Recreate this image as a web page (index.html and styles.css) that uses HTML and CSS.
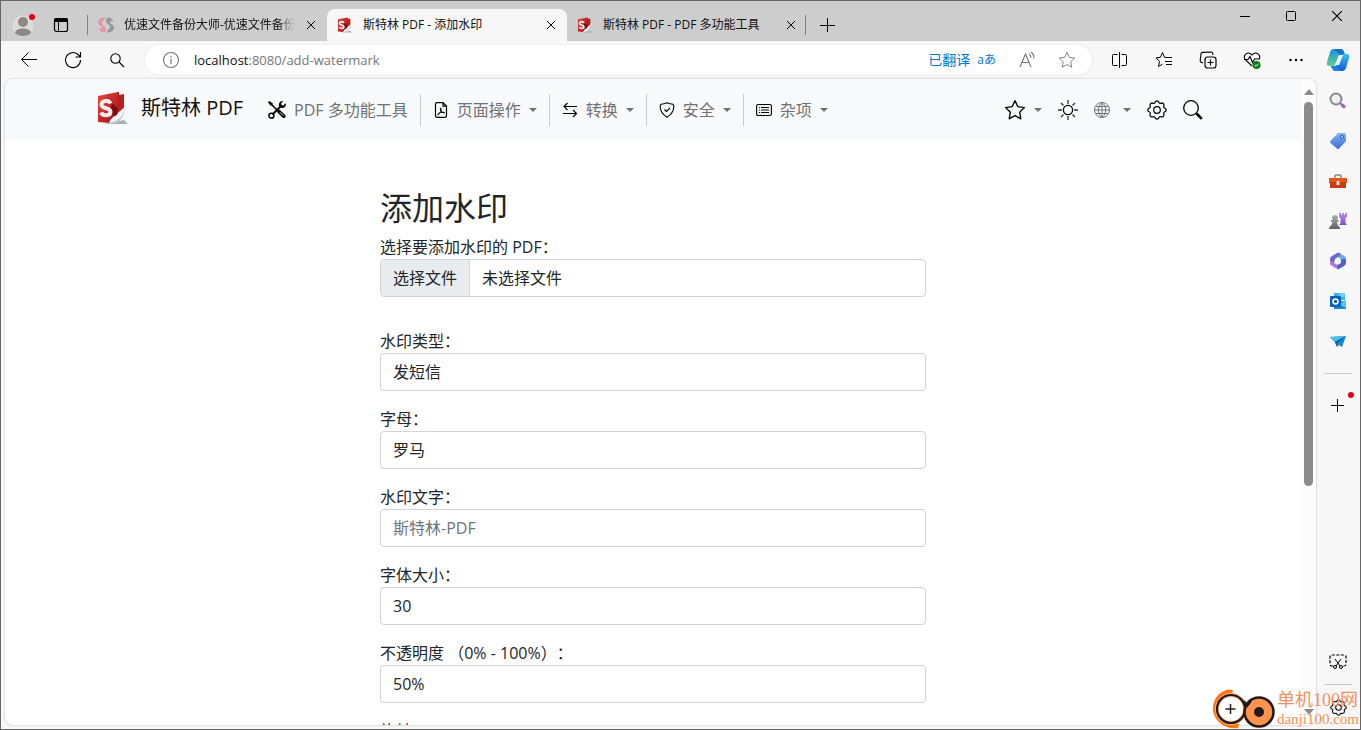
FILE: index.html
```html
<!DOCTYPE html>
<html lang="zh-CN">
<head>
<meta charset="utf-8">
<title>斯特林 PDF - 添加水印</title>
<link rel="stylesheet" href="styles.css">
</head>
<body>
<svg class="defs" aria-hidden="true">
  <defs>
    <linearGradient id="g-red" x1="0" y1="0" x2="1" y2="1"><stop offset="0" stop-color="#e8453f"/><stop offset="1" stop-color="#9d1014"/></linearGradient>
    <linearGradient id="g-cop1" x1="0" y1="0" x2="0" y2="1"><stop offset="0" stop-color="#1b8fe0"/><stop offset="1" stop-color="#62d08f"/></linearGradient>
    <linearGradient id="g-cop2" x1="0" y1="0" x2="0" y2="1"><stop offset="0" stop-color="#35c3f0"/><stop offset="1" stop-color="#1456dc"/></linearGradient>
    <linearGradient id="g-tag" x1="0" y1="0" x2="0" y2="1"><stop offset="0" stop-color="#7fb2f2"/><stop offset="1" stop-color="#3d6fd6"/></linearGradient>
    <linearGradient id="g-gray" x1="0" y1="0" x2="0" y2="1"><stop offset="0" stop-color="#b0b0b0"/><stop offset="1" stop-color="#606060"/></linearGradient>
    <linearGradient id="g-purple" x1="0" y1="0" x2="0" y2="1"><stop offset="0" stop-color="#b58af0"/><stop offset="1" stop-color="#8250c8"/></linearGradient>
    <symbol id="logo" viewBox="0 0 32 34">
      <path d="M7 33h24l-4-4z" fill="#9fb3b8"/>
      <path d="M14 4 22 1v5l5-2v19L10 31z" fill="#a81519"/>
      <path d="M1 5 21 1l1 20-9 11L1 31z" fill="url(#g-red)"/>
      <path d="M22 1v3l5-1v17l-6 6z" fill="#b8201f"/>
      <path d="M15 12l6 6-2 8-6-4z" fill="#7d0b10"/>
      <path d="M29 14c-3 5-8 6-9 10-3 1-6 3-8 8 7 1 14-1 17-18z" fill="#eef3f3"/>
      <path d="M29 14c-1 9-6 16-17 18 9 1 15-3 17-18z" fill="#bccbce"/>
      <path d="M13.500 12.500c-1.500-4-9-3-9 1.200 0 4.300 9 2.800 9 7 0 4.300-7.500 4.600-9.500.8" fill="none" stroke="#f5e9e9" stroke-width="4"/>
    </symbol>
    <symbol id="close" viewBox="0 0 10 10"><path d="M1 1l8 8M9 1 1 9" stroke="currentColor" fill="none"/></symbol>
    <symbol id="star" viewBox="0 0 20 20"><path d="M10 1.500l2.600 5.500 6 .8-4.400 4.200 1.100 6L10 15.100 4.700 18l1.100-6L1.400 7.800l6-.8z" fill="none" stroke="currentColor" stroke-linejoin="round"/></symbol>
    <symbol id="gear" viewBox="0 0 20 20"><path d="M8.500 1.500Q10 .2 11.500 1.500c.4 1.700 1.700 2.300 3.200 1.400q2.200.2 2.400 2.400c-.9 1.500-.3 2.800 1.400 3.200q1.300 1.500 0 3c-1.700.4-2.300 1.700-1.400 3.200q-.2 2.200-2.400 2.400c-1.500-.9-2.800-.3-3.200 1.400q-1.500 1.300-3 0c-.4-1.700-1.700-2.300-3.200-1.400q-2.200-.2-2.400-2.400c.9-1.500.3-2.800-1.400-3.200q-1.300-1.500 0-3c1.700-.4 2.300-1.700 1.400-3.200q.2-2.200 2.400-2.400c1.500.9 2.800.3 3.200-1.400z" fill="none" stroke="currentColor" stroke-width="1.200"/><circle cx="10" cy="10" r="3.300" fill="none" stroke="currentColor" stroke-width="1.200"/></symbol>
  </defs>
</svg>
<div class="window">
  <header class="titlebar">
    <button class="avatar" aria-label="个人资料">
      <svg viewBox="0 0 24 24" width="24" height="24"><circle cx="12" cy="13" r="10.500" fill="#dedcda"/><circle cx="12" cy="9" r="5" fill="#8c8885"/><path d="M4 20c0-6 16-6 16 0-4 4-12 4-16 0z" fill="#8c8885"/><circle cx="21" cy="4" r="3" fill="#e3000f"/></svg>
    </button>
    <button class="workspace" aria-label="标签页操作">
      <svg viewBox="0 0 16 16" width="16" height="16"><rect x="1.500" y="1.500" width="13" height="13" rx="2" fill="none" stroke="#000" stroke-width="1.200"/><path d="M1 5V3q0-2 2-2h10q2 0 2 2v2z"/><path d="M5.500 4v10" stroke="#000"/></svg>
    </button>
    <div class="tab tab-first">
      <svg viewBox="0 0 16 16" width="16" height="16"><path d="M7.500.5C3 0-1 3 .5 7c1 2 3 2 3.500 3.500C4 12 2.500 12 1 11c0 4 6 6.500 7 2 .5-3.500-4-4-4-7 0-2 2-2 3.500-5.500z" fill="#e3989c"/><path d="M8.500 15.500c4.500.5 8.500-2.500 7-6.500-1-2-3-2-3.500-3.500C12 4 13.500 4 15 5c0-4-6-6.500-7-2-.5 3.500 4 4 4 7 0 2-2 2-3.500 5.500z" fill="#969696"/></svg>
      <span class="tab-title tab-fade">优速文件备份大师-优速文件备份</span>
      <button class="x" aria-label="关闭"><svg width="10" height="10"><use href="#close"/></svg></button>
    </div>
    <div class="tab tab-active">
      <svg width="16" height="16"><use href="#logo"/></svg>
      <span class="tab-title">斯特林 PDF - 添加水印</span>
      <button class="x" aria-label="关闭"><svg width="10" height="10"><use href="#close"/></svg></button>
    </div>
    <div class="tab tab-last">
      <svg width="16" height="16"><use href="#logo"/></svg>
      <span class="tab-title">斯特林 PDF - PDF 多功能工具</span>
      <button class="x" aria-label="关闭"><svg width="10" height="10"><use href="#close"/></svg></button>
    </div>
    <button class="new-tab" aria-label="新建标签页"><svg viewBox="0 0 16 16" width="16" height="16"><path d="M8.500 1v14M1 8.500h15" stroke="#000" fill="none"/></svg></button>
    <div class="controls">
      <button aria-label="最小化"><svg viewBox="0 0 12 12" width="12" height="12"><path d="M1 6.500h10" stroke="#000"/></svg></button>
      <button aria-label="最大化"><svg viewBox="0 0 12 12" width="12" height="12"><rect x="1.500" y="1.500" width="9" height="9" rx="1" fill="none" stroke="#000"/></svg></button>
      <button aria-label="关闭窗口"><svg width="12" height="12"><use href="#close"/></svg></button>
    </div>
  </header>

  <div class="toolbar">
    <button class="tool" aria-label="后退"><svg viewBox="0 0 18 18" width="18" height="18"><path d="M17 8.500H1.500M8.500 1.500l-7 7 7 7" fill="none" stroke="#000"/></svg></button>
    <button class="tool" aria-label="刷新"><svg viewBox="0 0 18 18" width="18" height="18"><path d="M16.500 9A7.500 7.500 0 1 1 14 3.500l2 2M16.500 1v5h-5" fill="none" stroke="#000" stroke-width="1.100"/></svg></button>
    <button class="tool" aria-label="搜索"><svg viewBox="0 0 16 16" width="16" height="16"><circle cx="6.500" cy="6.500" r="4.700" fill="none" stroke="#000" stroke-width="1.100"/><path d="M10 10l5 5" stroke="#000" stroke-width="1.100"/></svg></button>
    <div class="address">
      <svg viewBox="0 0 18 18" width="18" height="18"><circle cx="9" cy="9" r="7.500" fill="none" stroke="#767676" stroke-width="1.100"/><path d="M9 8v5M9 5v1.500" stroke="#767676" stroke-width="1.200"/></svg>
      <div class="url"><b>localhost</b>:8080/add-watermark</div>
      <a class="translated" href="#">已翻译</a>
      <a class="glyphs" href="#">aあ</a>
      <button class="tool" aria-label="朗读"><svg viewBox="0 0 18 18" width="18" height="18"><path d="M2 16 7.500 3 13 16M4 11.500h7M11 3q2 1.500 2 4M13 1q3 2 3 6.500" fill="none" stroke="#767676" stroke-width="1.100"/></svg></button>
      <button class="tool gray" aria-label="收藏"><svg width="18" height="18"><use href="#star"/></svg></button>
    </div>
    <button class="tool" aria-label="分屏"><svg viewBox="0 0 18 18" width="18" height="18"><path d="M6.500 3.500h-4q-1 0-1 1v9q0 1 1 1h4M10.500 3.500h4q1 0 1 1v9q0 1-1 1h-4M8.500 1v16" fill="none" stroke="#000"/></svg></button>
    <button class="tool" aria-label="收藏夹"><svg viewBox="0 0 18 18" width="18" height="18"><path d="M11 6.500 9.500 6.300 7.500 1.500l-2 4.800-4.500.6 3.500 3.400-1 5.200 4-2.300M11 6.500h6M10 10.500h7M11 13.500h6" fill="none" stroke="#000"/></svg></button>
    <button class="tool" aria-label="集锦"><svg viewBox="0 0 18 18" width="18" height="18"><rect x="6" y="6" width="11" height="11" rx="2.500" fill="none" stroke="#000" stroke-width="1.200"/><path d="M11.500 8.500v6M8.500 11.500h6M4 12 2.600 11.500Q1 11 1.200 9.500L2 3q.2-1.800 2-1.600L12 1q1.600 0 1.800 1.600L14 4" fill="none" stroke="#000" stroke-width="1.100"/></svg></button>
    <button class="tool" aria-label="浏览器概要"><svg viewBox="0 0 18 18" width="18" height="18"><path d="M9 15 2 8.500C-.5 4 5-.5 9 4c4-4.500 9.500 0 7 4.500M1 8.500h4l2-3 2.500 6 2-3.500H16" fill="none" stroke="#000" stroke-width="1.100"/><circle cx="13.500" cy="14" r="4" fill="#0f7b10"/><path d="M11.700 14l1.300 1.300 2.300-2.500" fill="none" stroke="#fff"/></svg></button>
    <button class="tool" aria-label="更多"><svg viewBox="0 0 18 18" width="18" height="18"><circle cx="3.500" cy="9" r="1.200"/><circle cx="9" cy="9" r="1.200"/><circle cx="14.500" cy="9" r="1.200"/></svg></button>
    <button class="copilot" aria-label="Copilot"><svg viewBox="0 0 24 24" width="24" height="24"><path d="M8 1h7q2 0 3 3l1 3h-4q-2 0-3 3l-2 5q-1 3-4 3H3q-3 0-2-4L4 4q1-3 4-3z" fill="url(#g-cop1)"/><path d="M8 1h7q2 0 3 3l1 3h-5L10 3z" fill="#1573c8"/><path d="M16 23H9q-2 0-3-3l-1-2h4q2 0 3-3l2-5q1-4 4-4h3q3 0 2 4l-3 10q-1 3-4 3z" fill="url(#g-cop2)"/><path d="M16 23H9q-2 0-3-3l-1-2h4l5 4z" fill="#237be0"/><path d="M13 7h4l-4 10H9z" fill="#f4fbff"/></svg></button>
  </div>

  <div class="body">
    <div class="page">
      <div class="content">
        <nav class="navbar">
          <div class="container nav-row">
            <a class="brand" href="#"><svg width="32" height="34"><use href="#logo"/></svg><span>斯特林 PDF</span></a>
            <a class="item item-tools" href="#"><svg viewBox="0 0 16 16" width="18" height="18"><path d="M2 2l7 7" stroke="#000" stroke-width="1.300"/><path d="M1 0 0 1l2.200 3L4 4.200 4.200 2z"/><path d="M10 9.500l4 4" stroke="#000" stroke-width="3.200" stroke-linecap="round"/><path d="M10.500 10l3 3" stroke="#f8f9fb" stroke-width=".8"/><path d="M4 12l8-8" stroke="#000" stroke-width="1.800"/><path d="M12.500 0a3.300 3.300 0 0 0-2.700 4.300L12 6.200A3.300 3.300 0 0 0 15.800 2l-2.200 2-1.500-.3L11.600 2l2-1.900z"/><circle cx="3" cy="13" r="2.200" fill="none" stroke="#000" stroke-width="1.300"/></svg><span>PDF 多功能工具</span></a>
            <a class="item drop ruled" href="#"><svg viewBox="0 0 16 16" width="16" height="16"><path d="M10 .7H4Q2.500.7 2.500 2.200v11.600q0 1.500 1.500 1.500h8q1.500 0 1.500-1.500V4.200zM10 1v3.200h3.500" fill="none" stroke="#000" stroke-width="1.200"/><path d="M4.700 12.800C7.500 11 8.500 8 8 6.200c-.8-1-1.200 1 .3 3 1 1.500 2.500 2 3.200 1.600.4-1-3.500-.8-6.300 1z" fill="none" stroke="#000"/></svg><span>页面操作</span></a>
            <a class="item drop ruled" href="#"><svg viewBox="0 0 16 16" width="16" height="16"><path d="M15 4.500H2M5.500 1 2 4.500 5.500 8M1 11.500h13.500M11 8l3.500 3.500L11 15" fill="none" stroke="#000" stroke-width="1.100"/></svg><span>转换</span></a>
            <a class="item drop ruled" href="#"><svg viewBox="0 0 16 16" width="16" height="16"><path d="M8 .7Q5 2 2 2.300 1 3 1.200 5 1.500 11 8 15.300 14.500 11 14.800 5q.2-2-.8-2.700Q11 2 8 .7zM5.500 7.500l2 2L11 6" fill="none" stroke="#000" stroke-width="1.100"/></svg><span>安全</span></a>
            <a class="item drop ruled" href="#"><svg viewBox="0 0 16 16" width="16" height="16"><rect x=".6" y="2.500" width="14.800" height="11" rx="1.500" fill="none" stroke="#000" stroke-width="1.100"/><path d="M5 5.500h8M5 8h8M5 10.500h8M3 5.500h1M3 8h1M3 10.500h1" stroke="#000"/></svg><span>杂项</span></a>
            <div class="actions">
              <button class="drop" aria-label="收藏"><svg width="22" height="22"><use href="#star" stroke-width="1.200"/></svg></button>
              <button class="sun" aria-label="主题"><svg viewBox="0 0 20 20" width="20" height="20"><circle cx="10" cy="10" r="4.600" fill="none" stroke="#000" stroke-width="1.300"/><path d="M10 0v4M10 16v4M0 10h4M16 10h4M3 3l2.500 2.500M14.500 14.500 17 17M17 3l-2.500 2.500M5.500 14.500 3 17" stroke="#333" stroke-width="1.300"/></svg></button>
              <button class="drop lang" aria-label="语言"><svg viewBox="0 0 16 16" width="16" height="16"><path d="M8 .5a7.500 7.500 0 1 0 .01 0zM8 .5c-5 4-5 11 0 15 5-4 5-11 0-15zM8 .5v15M.5 8h15M2 4.500h12M2 11.500h12" fill="none" stroke="#6f7175"/></svg></button>
              <button aria-label="设置"><svg width="20" height="20"><use href="#gear"/></svg></button>
              <button aria-label="搜索"><svg viewBox="0 0 20 20" width="20" height="20"><circle cx="8" cy="8" r="7.300" fill="none" stroke="#000" stroke-width="1.300"/><path d="M13.500 13.500l5.300 5.300" stroke="#000" stroke-width="2.600"/></svg></button>
            </div>
          </div>
        </nav>
        <main class="container">
          <form class="form">
            <h1>添加水印</h1>
            <div class="field field-file">
              <label for="file">选择要添加水印的 PDF：</label>
              <label class="control file" for="file"><span class="file-btn">选择文件</span><span>未选择文件</span></label>
              <input class="visually-hidden" type="file" id="file">
            </div>
            <div class="field"><label for="type">水印类型：</label><select class="control" id="type"><option>发短信</option></select></div>
            <div class="field"><label for="alphabet">字母：</label><select class="control" id="alphabet"><option>罗马</option></select></div>
            <div class="field"><label for="text">水印文字：</label><input class="control" id="text" type="text" placeholder="斯特林-PDF"></div>
            <div class="field"><label for="size">字体大小：</label><input class="control" id="size" type="text" value="30"></div>
            <div class="field"><label for="opacity">不透明度 （0% - 100%）：</label><input class="control" id="opacity" type="text" value="50%"></div>
            <div class="field"><label for="rotation">旋转</label><input class="control" id="rotation" type="text"></div>
          </form>
        </main>
      </div>
      <div class="scrollbar">
        <svg viewBox="0 0 10 6" width="10" height="6"><path d="M0 6 5 0l5 6z" fill="#8b8b8b"/></svg>
        <div class="track"><div class="thumb"></div></div>
        <svg viewBox="0 0 10 6" width="10" height="6"><path d="M0 0l5 6 5-6z" fill="#8b8b8b"/></svg>
      </div>
    </div>
    <aside class="sidebar">
      <button aria-label="搜索"><svg viewBox="0 0 18 18" width="18" height="18"><circle cx="7" cy="7" r="5.500" fill="#eaf0f4" stroke="#8a8a8a" stroke-width="2"/><path d="M11 11l2 2" stroke="#888" stroke-width="2"/><path d="M12.500 12.500l3.500 3" stroke="#9c5fcb" stroke-width="3"/></svg></button>
      <button aria-label="购物"><svg viewBox="0 0 18 18" width="18" height="18"><path d="M9 1h6q2 0 2 2v6l-7 7.500q-1 1-2 0L1.500 11q-1-1 0-2z" fill="url(#g-tag)"/><circle cx="13" cy="5" r="1.500" fill="#dce9ff" stroke="#2c4f9e"/></svg></button>
      <button aria-label="工具"><svg viewBox="0 0 18 18" width="18" height="18"><path d="M6 6V4q0-1 1-1h4q1 0 1 1v2" fill="none" stroke="#888" stroke-width="1.500"/><path d="M0 6h18v5H0z" fill="#e5561b"/><path d="M1 10h16v6H1z" fill="#c83c0d"/><rect x="7.500" y="9" width="3" height="4" fill="#ddd"/></svg></button>
      <button aria-label="游戏"><svg viewBox="0 0 18 18" width="18" height="18"><path d="M10 1h2v2h1V1h2v2h1V1h2v4l-1.500 1v5l1.500 2h-8l1.500-2V6L10 5z" fill="url(#g-purple)"/><path d="M3 6a3 3 0 1 1 6 0l-1 2h1.500v2H8l1 4q2 0 2 3H0q0-3 2-3l1.500-4H2V8h2z" fill="url(#g-gray)"/></svg></button>
      <button aria-label="Microsoft 365"><svg viewBox="0 0 18 18" width="18" height="18"><path d="M9 .5 15.500 4Q17 5 17 7v4l-5-3-3-3z" fill="#67aaf0"/><path d="M9 .5 3 4Q1 5 1 7v5l4-1 1-4 4-3 2-2z" fill="#6a65cf"/><path d="M1 8v3q0 2 2 3l6 3.500 3-3-6-3z" fill="#b17ad7"/><path d="M17 7v4q0 2-2 3l-6 3.500-1-4 4-3V7z" fill="#5361c7"/><circle cx="9" cy="9" r="3" fill="#f7f7f7"/></svg></button>
      <button aria-label="Outlook"><svg viewBox="0 0 18 18" width="18" height="18"><path d="M5 1h11v7H5z" fill="#37b4ec"/><path d="M10 1h6v4h-6z" fill="#6bd3fa"/><path d="M5 7l12 3v7H5z" fill="#178ad6"/><path d="M17 8v8l-7-4z" fill="#50c6f5"/><rect x="1" y="4" width="11" height="11" rx="1" fill="#0b62b5"/><circle cx="6.500" cy="9.500" r="2.500" fill="none" stroke="#fff" stroke-width="1.500"/></svg></button>
      <button aria-label="Drop"><svg viewBox="0 0 18 18" width="18" height="18"><path d="M1 5 17 4l-4 11-3-2-2 2-2-5z" fill="#1689cf"/><path d="M1 5l16-1L6 10z" fill="#49bdf0"/><path d="M6 10 17 4l-9 7v4z" fill="#0a5a96"/></svg></button>
      <hr>
      <button class="add" aria-label="自定义"><svg viewBox="0 0 18 18" width="18" height="18"><path d="M8.500 2v13M2 8.500h13" stroke="#000"/></svg><i class="dot"></i></button>
      <button class="shot" aria-label="屏幕截图"><svg viewBox="0 0 18 18" width="18" height="18"><path d="M4 13H3q-2 0-2-2V4q0-2 2-2h12q2 0 2 2v7q0 2-2 2h-1" fill="none" stroke="#000" stroke-width="1.200" stroke-dasharray="3 1.500"/><path d="M6 6l5 7M12 6l-5 7" stroke="#000"/><circle cx="6" cy="14" r="1.500" fill="none" stroke="#000"/><circle cx="12" cy="14" r="1.500" fill="none" stroke="#000"/></svg></button>
      <hr>
      <button class="prefs" aria-label="设置"><svg width="17" height="17"><use href="#gear"/></svg></button>
    </aside>
  </div>
</div>
<div class="site-mark">
  <svg viewBox="0 0 64 42" width="64" height="42"><path d="M21 2C13-1 0 8 1 22c1 11 12 20 25 18l1-4C14 37 4 30 4 21 4 12 10 6 20 6z" fill="#ff7414"/><circle cx="19" cy="21" r="14" fill="#fff" stroke="#ffb27a" stroke-width="4"/><circle cx="19" cy="21" r="14" fill="none" stroke="#21191a" stroke-width="2.200"/><path d="M18.500 16v10M13.500 21h10" stroke="#21191a" stroke-width="1.500"/><circle cx="47" cy="24" r="14.500" fill="#ff944f" stroke="#21191a" stroke-width="2.500"/><path d="M32 13l3 5 4-5" stroke="#21191a" stroke-width="2.200" fill="none"/><circle cx="47" cy="24" r="5" fill="#21191a"/></svg>
  <div><div class="mark-name">单机100网</div><div class="mark-host">danji100.com</div></div>
</div>
</body>
</html>
```
FILE: styles.css
```css
* { box-sizing: border-box; }
body {
  margin: 0;
  height: 100vh;
  overflow: hidden;
  font-family: "Open Sans", "Noto Sans CJK SC", sans-serif;
  font-size: 16px;
  line-height: 24px;
  color: #212529;
  text-spacing-trim: space-all;
}
svg { display: block; flex: none; }
.defs { position: absolute; width: 0; height: 0; }
button {
  display: flex;
  align-items: center;
  justify-content: center;
  padding: 0;
  border: 0;
  background: none;
  color: #000;
  font: inherit;
}
a { color: inherit; text-decoration: none; }

.window {
  height: 100%;
  display: flex;
  flex-direction: column;
  border: 1px solid #666;
  background: #f7f7f7;
}

/* title bar */
.titlebar {
  flex: none;
  height: 40px;
  display: flex;
  align-items: flex-end;
  background: #cdcdcd;
  font-size: 12px;
  line-height: 16px;
  color: #111;
}
.avatar { width: 24px; height: 32px; margin-left: 10px; }
.workspace { width: 32px; height: 32px; margin: 0 10px; }
.tab {
  width: 240px;
  height: 32px;
  display: flex;
  align-items: center;
  gap: 10px;
  padding: 0 10px;
}
.tab-title { flex: 1; overflow: hidden; white-space: nowrap; }
.tab-fade { mask-image: linear-gradient(to right, #000 90%, transparent); }
.x { width: 12px; height: 16px; }
.tab-first::before, .new-tab::before {
  content: "";
  width: 1px;
  height: 20px;
  background: #808080;
}
.tab-first { padding-left: 0; }
.tab-active { background: #f7f7f7; border-radius: 8px 8px 0 0; }
.new-tab { height: 32px; gap: 13px; margin-left: -2px; }
.controls { display: flex; margin-left: auto; align-self: flex-start; }
.controls button { width: 46px; height: 30px; }

/* toolbar */
.toolbar {
  flex: none;
  height: 38px;
  display: flex;
  align-items: center;
  padding-left: 6px;
}
.tool { width: 44px; height: 30px; }
.gray { color: #767676; }
.address {
  flex: 1;
  height: 30px;
  display: flex;
  align-items: center;
  margin: 0 6px;
  padding: 0 5px 0 17px;
  background: #fff;
  border-radius: 15px;
  box-shadow: 0 0 2px #ddd;
  font-size: 14px;
}
.address .tool { width: 40px; }
.url { flex: 1; margin-left: 14px; font-size: 13px; color: #767676; }
.url b { font-weight: 400; color: #111; }
.translated, .glyphs { color: #0078d4; }
.glyphs { margin: 0 11px 0 7px; font-size: 12px; }
.copilot { width: 42px; height: 30px; padding-right: 2px; }

/* page */
.body { flex: 1; min-height: 0; display: flex; padding: 0 0 4px 4px; }
.page {
  flex: 1;
  min-width: 0;
  display: flex;
  overflow: hidden;
  background: #fff;
  border-radius: 8px;
  box-shadow: 0 0 2px #aaa;
}
.content { flex: 1; min-width: 0; overflow: hidden; }
.container { max-width: 1140px; margin: 0 auto; padding: 0 12px; }
.navbar { background: #f8f9fb; }
.nav-row { height: 62px; display: flex; align-items: center; }
.brand {
  display: flex;
  align-items: center;
  gap: 12px;
  margin: 0 17px 4px 2px;
  font-size: 20px;
  color: #111;
  white-space: nowrap;
}
.item {
  height: 32px;
  display: flex;
  align-items: center;
  gap: 8px;
  padding: 0 12px;
  color: #6f7175;
  white-space: nowrap;
}
.item-tools { padding-left: 8px; }
.ruled { border-left: 1px solid #c8cace; }
.drop::after {
  content: "";
  border: 4px solid transparent;
  border-top-color: #6f7175;
  border-bottom: 0;
}
.actions { display: flex; align-items: center; gap: 16px; margin-left: auto; padding-right: 8px; }
.actions .drop { gap: 8px; }
.actions .lang { gap: 13px; }

.form { max-width: 546px; margin: 0 auto; padding-top: 48px; }
h1 { margin: 0 0 8px; font-size: 32px; line-height: 38px; font-weight: 400; }
.field { display: flex; flex-direction: column; margin-bottom: 16px; }
.field-file { margin-bottom: 32px; position: relative; }
.control {
  width: 100%;
  height: 38px;
  padding: 0 12px;
  border: 1px solid #ced4da;
  border-radius: 4px;
  background: #fff;
  color: #212529;
  font: inherit;
  appearance: none;
}
.control::placeholder { color: #6c757d; opacity: 1; }
.file { display: flex; align-items: center; gap: 12px; padding-left: 0; overflow: hidden; }
.file-btn {
  align-self: stretch;
  display: flex;
  align-items: center;
  padding: 0 12px;
  background: #e9ecef;
  border-right: 1px solid #ced4da;
}
.visually-hidden { position: absolute; width: 1px; height: 1px; opacity: 0; }

.scrollbar {
  width: 15px;
  display: flex;
  flex-direction: column;
  align-items: center;
  gap: 7px;
  padding: 10px 0 10px;
  background: #fcfcfc;
}
.track { flex: 1; }
.thumb { width: 9px; height: 64%; border-radius: 5px; background: #8b8b8b; }

/* sidebar */
.sidebar { width: 44px; display: flex; flex-direction: column; align-items: center; padding-top: 2px; }
.sidebar button { width: 40px; height: 40px; }
.sidebar hr { width: 28px; height: 1px; margin: 12px 0; border: 0; background: #c8c8c8; }
.add { position: relative; }
.dot { position: absolute; top: 6px; right: 4px; width: 6px; height: 6px; border-radius: 50%; background: #e3000f; }
.sidebar .shot { margin-top: auto; height: 20px; }
.sidebar .shot + hr { margin-bottom: 4px; }
.sidebar .prefs { height: 36px; }

/* site mark over the corner of the window */
.site-mark {
  position: absolute;
  right: 2px;
  bottom: 0;
  display: flex;
  align-items: center;
  gap: 1px;
  color: #f7905a;
}
.mark-name { font: 18px/20px "Liberation Serif", "Noto Sans CJK SC", serif; }
.mark-host { font: 15px/18px "Liberation Serif", serif; }
```
